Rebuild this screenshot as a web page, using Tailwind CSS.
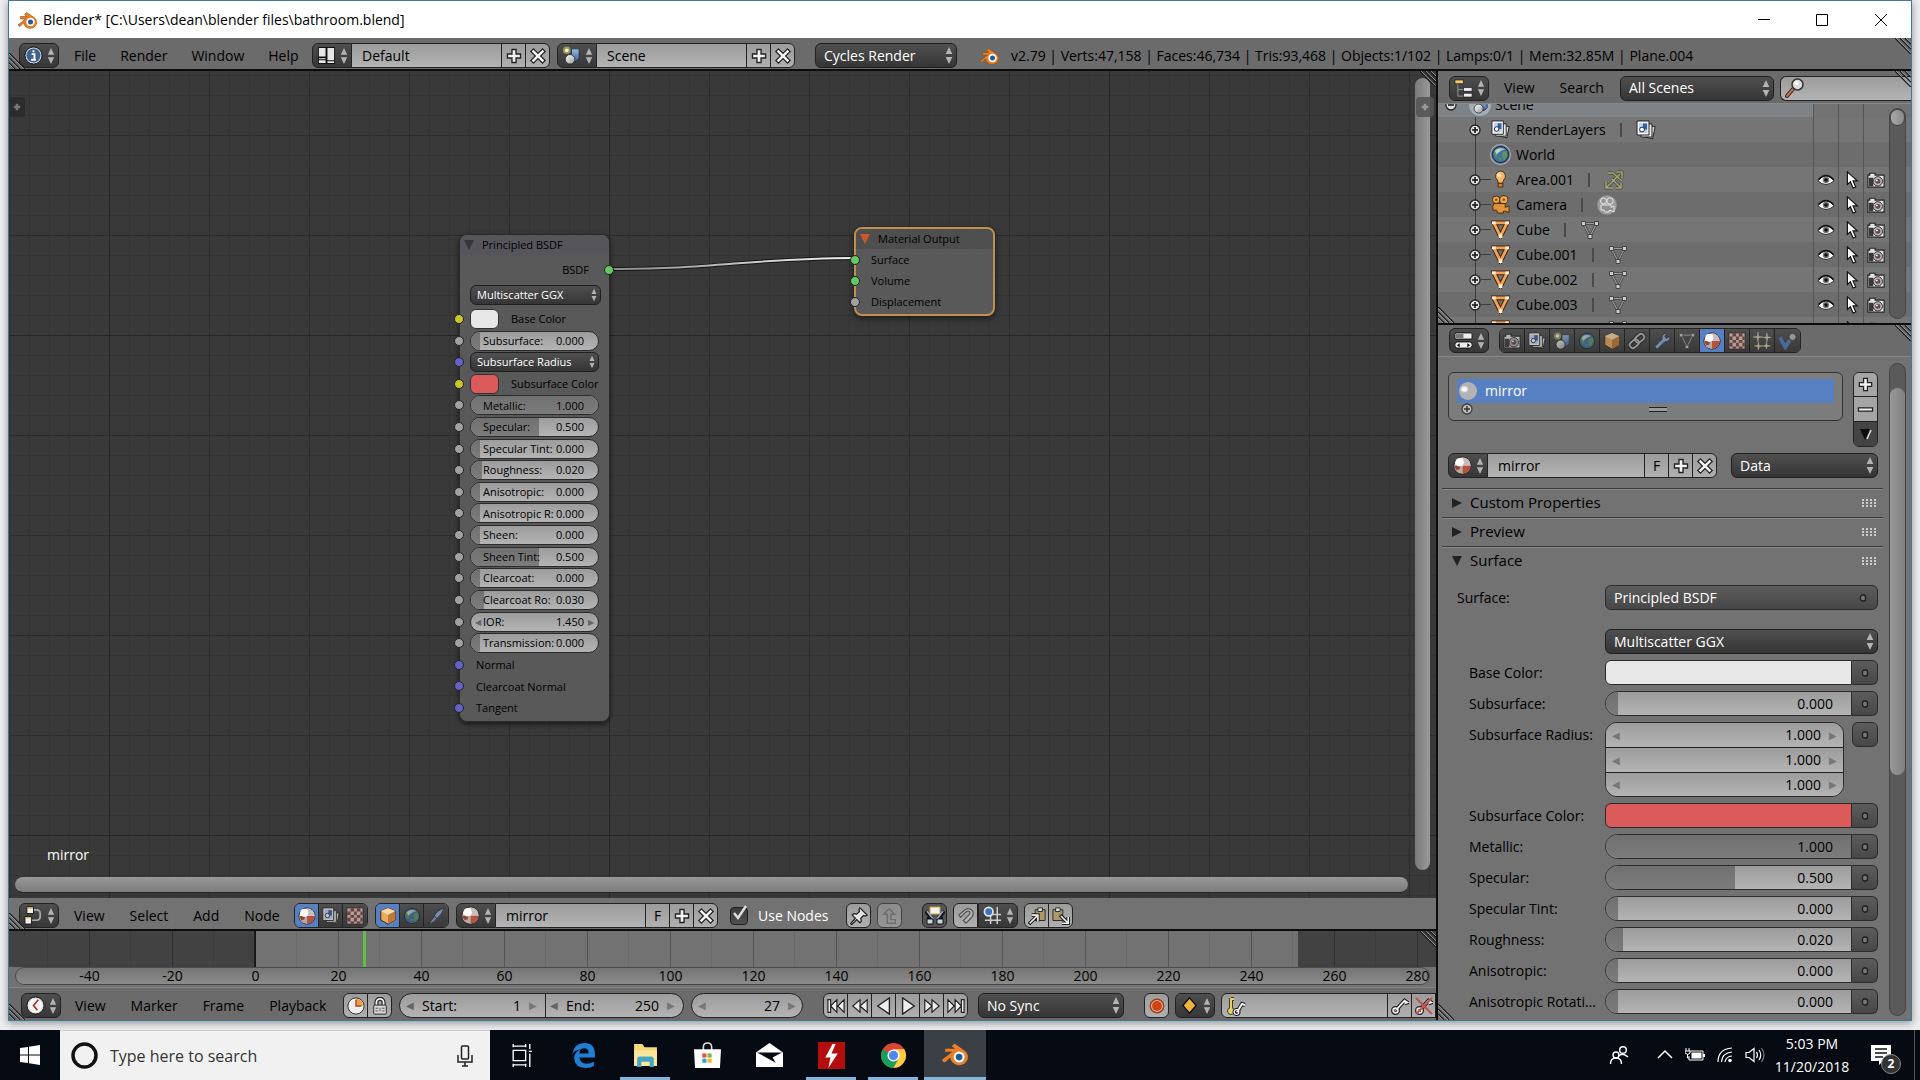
<!DOCTYPE html>
<html lang="en">

<head>
    <meta charset="UTF-8">
    <meta name="viewport" content="width=device-width, initial-scale=1.0">
    <title>Blender* [C:\Users\dean\blender files\bathroom.blend]</title>
    <script src="https://cdn.jsdelivr.net/npm/@tailwindcss/browser@4"></script>
</head>

<body class="h-screen overflow-hidden bg-[#eceef0] font-['Open_Sans','Noto_Sans',sans-serif] text-sm text-black">

    <!-- icon sprites -->
    <svg class="absolute h-0 w-0">
        <defs>
            <linearGradient id="gBall" x1="0" y1="0" x2="1" y2="1"><stop offset="0" stop-color="#fff"/><stop offset="1" stop-color="#999"/></linearGradient>
            <linearGradient id="gBlue" x1="0" y1="0" x2="0" y2="1"><stop offset="0" stop-color="#9dbbe0"/><stop offset="1" stop-color="#3c639b"/></linearGradient>
        </defs>
        <symbol id="arrows" viewBox="0 0 8 20"><path d="M4 1 7.500 8.500H.5zM4 19 .5 11.500h7z" fill="#b4b4b4"/></symbol>
        <symbol id="blender" viewBox="0 0 22 20">
            <path d="M1 15 8.500 9H3.500V6.500h6.500L7.500 4.500l2-2L17 7.500a6.500 6 0 1 1-10.300 5.300L3 16.500z" fill="#ea7f24" stroke="#8a4a1a" stroke-width=".6"/>
            <circle cx="13.500" cy="12" r="4.200" fill="#fff"/><circle cx="13.500" cy="12" r="2.500" fill="#245a8f"/>
        </symbol>
        <symbol id="info" viewBox="0 0 20 20">
            <circle cx="10" cy="10" r="9" fill="#c9d4e2" stroke="#111"/><circle cx="10" cy="10" r="7.300" fill="#40618f"/>
            <path d="M8 8.500h3v5.500M7.500 14.500h5M10 4.500v2.200" stroke="#fff" stroke-width="2" fill="none"/>
        </symbol>
        <symbol id="plus" viewBox="0 0 20 20"><path d="M10 2v16M2 10h16" stroke="#222" stroke-width="6"/><path d="M10 3.500v13M3.500 10h13" stroke="#f2f2f2" stroke-width="3"/></symbol>
        <symbol id="minus" viewBox="0 0 20 20"><path d="M1 10h18" stroke="#222" stroke-width="5.500"/><path d="M2.500 10h15" stroke="#f2f2f2" stroke-width="2.500"/></symbol>
        <symbol id="cross" viewBox="0 0 20 20"><path d="M3 3l14 14M17 3 3 17" stroke="#222" stroke-width="5.500"/><path d="M4 4l12 12M16 4 4 16" stroke="#f2f2f2" stroke-width="2.800"/></symbol>
        <symbol id="layout" viewBox="0 0 20 20"><rect x="1" y="1" width="18" height="18" fill="#111"/><path d="M2 2h7v9H2zM11 2h7v13h-7zM2 13h7v1H2zM2 15h7v3H2zM11 16h7v2h-7z" fill="#e6e6e6"/></symbol>
        <symbol id="scene" viewBox="0 0 20 20">
            <circle cx="5" cy="4.500" r="4" fill="#f3f09a" opacity=".45"/><circle cx="5" cy="4.500" r="2" fill="#f7f5a8"/>
            <path d="M10 3h8v10l-3 3h-5z" fill="url(#gBlue)" stroke="#1b2c48" stroke-width=".8"/>
            <circle cx="8.500" cy="14" r="5" fill="url(#gBall)" stroke="#222" stroke-width=".8"/>
        </symbol>
        <symbol id="outliner" viewBox="0 0 20 20"><path d="M4 5v13h7M4 11h7" stroke="#999" fill="none"/><path d="M1 1h9v4H1z" fill="#f0c96c" stroke="#111" stroke-width=".7"/><path d="M10 9h9v4h-9zM10 15h9v4h-9z" fill="#eee" stroke="#111" stroke-width=".7"/></symbol>
        <symbol id="properties" viewBox="0 0 20 20"><rect x="1" y="2" width="18" height="6.500" rx="1.500" fill="#eee" stroke="#111"/><path d="M2 3h8v4.500H2z" fill="#777"/><rect x="1" y="11.500" width="18" height="6.500" rx="2.500" fill="#eee" stroke="#111"/><path d="M6 13v4l-3-2zM14 13v4l3-2z" fill="#111"/></symbol>
        <symbol id="nodes" viewBox="0 0 20 20"><path d="M9 4h4q4 0 4 4v3q0 4-4 4H8" stroke="#aaa" stroke-width="1.800" fill="none"/><path d="M3 1h7v7H3zM1 11h7v8H1z" fill="#f2efe4" stroke="#111"/><path d="M3.500 1.500h6V3h-6zM1.500 11.500h6V13h-6z" fill="#d9b95a"/></symbol>
        <symbol id="clock" viewBox="0 0 20 20"><circle cx="10" cy="10" r="9" fill="#ddd" stroke="#111"/><circle cx="10" cy="10" r="7" fill="#f6f6f6"/><path d="M13 4 8 10l4 5" stroke="#a32" stroke-width="1.800" fill="none"/></symbol>
        <symbol id="clockorange" viewBox="0 0 20 20"><circle cx="10" cy="10" r="9" fill="#eee" stroke="#222"/><path d="M10 2a8 8 0 0 1 8 8h-8z" fill="#f0a030"/><path d="M10 3v7h6" stroke="#a44" stroke-width="1.600" fill="none"/></symbol>
        <symbol id="lock" viewBox="0 0 20 20"><path d="M6 10V6a4 4 0 0 1 8 0v4" stroke="#222" stroke-width="4.500" fill="none"/><path d="M6 10V6a4 4 0 0 1 8 0v4" stroke="#eee" stroke-width="2" fill="none"/><rect x="3" y="9" width="14" height="10" rx="1" fill="#d5d5d5" stroke="#222"/><path d="M10 12v4M5 12.500h3M12 12.500h3M5 15.500h3M12 15.500h3" stroke="#555"/></symbol>
        <symbol id="layers" viewBox="0 0 20 20"><path d="M9 6h9v12H9z" fill="#ddd" stroke="#222" transform="rotate(12 14 12)"/><path d="M5 4h11v13H5z" fill="#e8e8e8" stroke="#222"/><path d="M1 1h12v14H1z" fill="#f6f6f6" stroke="#222"/><path d="M3 3h8.500v10H3z" fill="#c3d2ea"/><path d="M7 3.500h4v6H7z" fill="#3562a5"/><circle cx="6" cy="9.500" r="2.400" fill="#fff" stroke="#224"/></symbol>
        <symbol id="world" viewBox="0 0 20 20"><circle cx="10" cy="10" r="8.500" fill="#41719e" stroke="#16222e"/><path d="M4 6q4-4 6-2l-1 3-3 2 1 3-2 1-2-4zM12 8l4-2 1 5-3 5-2-2zM8 13l3 1-1 3z" fill="#5f9657"/><path d="M4 6q4-4.500 11-1.500Q9 6 6 10z" fill="#dce8ee" opacity=".75"/></symbol>
        <symbol id="lamp" viewBox="0 0 20 20"><path d="M10 1a5.500 5.500 0 0 1 3.500 9.500q-1 1-1 3.500h-5q0-2.500-1-3.500A5.500 5.500 0 0 1 10 1z" fill="#f3b66c" stroke="#4a2b0b"/><circle cx="8.500" cy="5.500" r="2.200" fill="#ffe2b8"/><path d="M7.500 14h5v4h-5z" fill="#c98032" stroke="#4a2b0b"/></symbol>
        <symbol id="camera" viewBox="0 0 20 20"><circle cx="5.500" cy="5" r="4" fill="#eea64e" stroke="#4a2b0b"/><circle cx="13.500" cy="5" r="4.300" fill="#eea64e" stroke="#4a2b0b"/><path d="M3 9h12v4l4-1.500v7L15 17h-2v2H7l-1-3H2v-4z" fill="#e2923a" stroke="#4a2b0b"/><circle cx="5.500" cy="5" r="1.300" fill="#80501c"/><circle cx="13.500" cy="5" r="1.300" fill="#80501c"/></symbol>
        <symbol id="cameradata" viewBox="0 0 20 20"><circle cx="10" cy="10" r="9.800" fill="#b0b0b0" opacity=".7"/><circle cx="6.500" cy="6" r="3" fill="#999" stroke="#e5e5e5"/><circle cx="13" cy="6" r="3.200" fill="#999" stroke="#e5e5e5"/><path d="M4 10h10v2.500l3-1.500v6l-3-1.500h-2V17H8l-1-2H4z" fill="#8f8f8f" stroke="#e5e5e5"/></symbol>
        <symbol id="lampdata" viewBox="0 0 20 20"><path d="M2 18 16 4M2 11v7h7M9 3l9 8M13 2h5v6M8 9l8 8M12 18h5v-5M4 3l5 0" stroke="#494935" stroke-width="2.800" fill="none"/><path d="M2 18 16 4M2 11v7h7M9 3l9 8M13 2h5v6M8 9l8 8M12 18h5v-5M4 3l5 0" stroke="#a6a57b" stroke-width="1.500" fill="none"/></symbol>
        <symbol id="mesh" viewBox="0 0 20 20"><path d="M3 3h14l-7 14z" fill="none" stroke="#432006" stroke-width="5"/><path d="M3 3h14l-7 14z" fill="none" stroke="#f0a35a" stroke-width="3"/><path d="M1 1.500h4v3H1zM15 1.500h4v3h-4zM8 15h4v4H8z" fill="#fff0dc"/></symbol>
        <symbol id="meshdata" viewBox="0 0 20 20"><path d="M3.500 3.500h13L10 16.500z" fill="none" stroke="#444" stroke-width="2.600"/><path d="M3.500 3.500h13L10 16.500z" fill="none" stroke="#999" stroke-width="1.200"/><path d="M1.500 1.500h4v4h-4zM14.500 1.500h4v4h-4zM8 14.500h4v4H8z" fill="#ccc" stroke="#444"/></symbol>
        <symbol id="eye" viewBox="0 0 20 20"><path d="M1 11q9-11 18 0-9 8-18 0z" fill="#f4f4f4" stroke="#222"/><circle cx="10" cy="10" r="3.500" fill="#777"/><circle cx="10" cy="10" r="2" fill="#111"/><path d="M1.500 9.500q8.500-9 17 0" stroke="#111" stroke-width="1.500" fill="none"/></symbol>
        <symbol id="pointer" viewBox="0 0 20 20"><path d="M6 1v14l3.300-3 3 7 3-1.300-3-6.700H17z" fill="#fff" stroke="#111" stroke-width="1.300"/></symbol>
        <symbol id="photo" viewBox="0 0 20 20"><path d="M1 4.500h2V2.500h6v2h10V18H1z" fill="#e4e4e4" stroke="#222" stroke-width="1.300"/><path d="M2 7.500h5v9.500H2z" fill="#3a3a3a"/><circle cx="12" cy="11.500" r="5.200" fill="#b5b5b5" stroke="#222"/><circle cx="12" cy="11.500" r="2.800" fill="#6b454f"/><circle cx="11" cy="10.500" r="1" fill="#fff"/></symbol>
        <symbol id="cube" viewBox="0 0 20 20"><path d="M10 1 18 4.500v10L10 19l-8-4.500v-10z" fill="#e9a95f" stroke="#3c2208"/><path d="M10 8.500 18 4.500v10L10 19z" fill="#bd7a35"/><path d="M10 1 18 4.500 10 8.500 2 4.500z" fill="#f9d8a8"/></symbol>
        <symbol id="chain" viewBox="0 0 20 20"><g fill="none" stroke="#222" stroke-width="4.500"><rect x="7.500" y="3.500" width="11" height="7" rx="3.500" transform="rotate(-40 13 7)"/><rect x="1.500" y="9.500" width="11" height="7" rx="3.500" transform="rotate(-40 7 13)"/></g><g fill="none" stroke="#bbb" stroke-width="2"><rect x="7.500" y="3.500" width="11" height="7" rx="3.500" transform="rotate(-40 13 7)"/><rect x="1.500" y="9.500" width="11" height="7" rx="3.500" transform="rotate(-40 7 13)"/></g></symbol>
        <symbol id="wrench" viewBox="0 0 20 20"><path d="M2 16 10 8q-1-5 4-7l1 1-2 3 2 2 3-2 1 1q-1 5-6 5l-8 8q-2 0-3-3z" fill="#8fa9d2" stroke="#1c2a42"/></symbol>
        <symbol id="ball" viewBox="0 0 20 20"><circle cx="10" cy="10" r="9" fill="#e8e4e2" stroke="#222"/><path d="M10 10H1.500q0 8 8.500 8.500z" fill="#b9a9a5"/><path d="M10 10h8.500a8.500 8.500 0 0 1-8.500 8.500z" fill="#b4533f"/><path d="M10 1.500a8.500 8.500 0 0 1 8.500 8.500H10z" fill="#c9bcb9"/><path d="M1.500 10H8l-1 4-3 1q-2-2-2.500-5z" fill="#934535"/><circle cx="7" cy="6.500" r="4.500" fill="#fff" opacity=".9"/></symbol>
        <symbol id="checker" viewBox="0 0 20 20"><path d="M1 1h18v18H1z" fill="#d5cac6" stroke="#222"/><path d="M5 1.500h4V5H5zM12 1.500h4V5h-4zM1.500 5H5v4H1.500zM9 5h3v4H9zM16 5h2.500v4H16zM5 9h4v3H5zM12 9h4v3h-4zM1.500 12H5v4H1.500zM9 12h3v4H9zM16 12h2.500v4H16zM5 16h4v2.500H5zM12 16h4v2.500h-4z" fill="#803d35"/></symbol>
        <symbol id="sparks" viewBox="0 0 20 20"><path d="M5.500 0 6.300 5l4.700.5-4.700.8-.8 4.700-.8-4.700L0 5.500 4.700 5zM15.500 1l.7 4.300 3.800.7-3.800.7-.7 4.300-.7-4.300L11 6l3.800-.7zM6 11l.8 4 3.700.5-3.700.8L6 20l-.8-3.700-3.700-.8 3.700-.5zM15 11l.7 3.800 3.800.7-3.800.7L15 19l-.7-2.800-3.800-.7 3.800-.7z" fill="#e0dcae" stroke="#e0dcae" stroke-width=".5"/></symbol>
        <symbol id="physics" viewBox="0 0 20 20"><path d="M1 6l6 11 5-8" fill="none" stroke="#4e7cc0" stroke-width="4"/><circle cx="15" cy="5.500" r="4" fill="#b5b5b5" stroke="#333"/></symbol>
        <symbol id="brush" viewBox="0 0 20 20"><path d="M19 1q-8 3-11 9l3 3q6-5 8-12z" fill="#8fabd8" stroke="#1c2a42"/><path d="M8 10l3 3q-3 5-10 6 4-3 7-9z" fill="#8fa0b8" stroke="#1c2a42"/></symbol>
        <symbol id="pin" viewBox="0 0 20 20"><path d="M11 1l8 8-2 1-2-.5-3 3 .5 3.500-1.500 1.500-3.500-3.500L2 19.500l-1.500-1L6 12.500 2.500 9 4 7.500l3.500.5 3-3L10 3z" fill="#e6e6e6" stroke="#222" stroke-width="1.400"/></symbol>
        <symbol id="uparrow" viewBox="0 0 20 20"><path d="M9 2l6 6h-4v6h5v4H7V8H3z" fill="none" stroke="#6c6c6c" stroke-width="1.600"/></symbol>
        <symbol id="autorender" viewBox="0 0 20 20"><path d="M1 5 7 13M19 5l-6 8M2 13h6M12 13h6M2 16h6M12 16h6" stroke="#111" stroke-width="4"/><path d="M2 5 8 13M18 5l-6 8" stroke="#86a1c5" stroke-width="2"/><path d="M2 13h6v5H2zM12 13h6v5h-6z" fill="#c9d3df" stroke="#111"/><path d="M5 1h10v7H5z" fill="#f1f1f1" stroke="#c9a83d"/></symbol>
        <symbol id="magnet" viewBox="0 0 20 20"><path d="M2 9 9 3q4.500-3 8 1 2.500 4-1 8l-6 6-3-3 6-6q2-2 1-3.500T10.500 5L4 11.500z" fill="#b5b5b5" stroke="#555" stroke-width="1.400"/></symbol>
        <symbol id="snapgrid" viewBox="0 0 20 20"><path d="M8 3v16M15 1v18M2 9h17M2 15h17" stroke="#ccc" stroke-width="1.600"/><circle cx="6" cy="6" r="4.500" fill="#3f74bc" stroke="#dfe9f5" stroke-width="1.800"/></symbol>
        <symbol id="copy" viewBox="0 0 20 20"><path d="M8 3h11v12H8z" fill="#ae9a66" stroke="#222"/><path d="M11 1h5v4h-5z" fill="#ddd" stroke="#222"/><path d="M1 19l8-8M4 9h7v7" stroke="#222" stroke-width="4" fill="none"/><path d="M2 18l8-8M4 9h7v7" stroke="#eee" stroke-width="1.800" fill="none"/></symbol>
        <symbol id="paste" viewBox="0 0 20 20"><path d="M1 3h11v12H1z" fill="#ae9a66" stroke="#222"/><path d="M4 1h5v4H4z" fill="#ddd" stroke="#222"/><path d="M9 9l9 9M18 11v7h-7" stroke="#222" stroke-width="4" fill="none"/><path d="M10 10l8 8M18 11v7h-7" stroke="#eee" stroke-width="1.800" fill="none"/></symbol>
        <symbol id="tostart" viewBox="0 0 20 20"><path d="M1 3h3v14H1zM11 3v14L4 10zM19 3v14l-7-7z" fill="#eee" stroke="#222" stroke-width="1.300"/></symbol>
        <symbol id="prevkey" viewBox="0 0 20 20"><path d="M10 3v14l-8-7zM18 3v14l-8-7z" fill="#eee" stroke="#222" stroke-width="1.300"/></symbol>
        <symbol id="playback" viewBox="0 0 20 20"><path d="M16 1v18L3 10z" fill="#eee" stroke="#222" stroke-width="1.500"/></symbol>
        <symbol id="play" viewBox="0 0 20 20"><path d="M4 1v18l13-9z" fill="#eee" stroke="#222" stroke-width="1.500"/></symbol>
        <symbol id="nextkey" viewBox="0 0 20 20"><path d="M2 3v14l8-7zM10 3v14l8-7z" fill="#eee" stroke="#222" stroke-width="1.300"/></symbol>
        <symbol id="toend" viewBox="0 0 20 20"><path d="M16 3h3v14h-3zM9 3v14l7-7zM1 3v14l7-7z" fill="#eee" stroke="#222" stroke-width="1.300"/></symbol>
        <symbol id="record" viewBox="0 0 20 20"><circle cx="10" cy="10" r="7.500" fill="#d9b0a0" stroke="#a33a15" stroke-width="1.500"/><circle cx="10" cy="10" r="5.500" fill="#d2440f"/></symbol>
        <symbol id="diamond" viewBox="0 0 20 20"><path d="M10 2l7 8-7 8-7-8z" fill="#f3b33c" stroke="#111" stroke-width="1.500"/></symbol>
        <symbol id="key" viewBox="0 0 20 20"><path d="M6 14 15 4l3 2-3 1M6 14" stroke="#222" stroke-width="4.500" fill="none"/><circle cx="5" cy="15" r="3" stroke="#222" stroke-width="4" fill="none"/><path d="M6 14 15 4l3 2-3 1" stroke="#eee" stroke-width="2" fill="none"/><circle cx="5" cy="15" r="2.700" stroke="#eee" stroke-width="1.800" fill="none"/></symbol>
        <symbol id="keyset" viewBox="0 0 20 20"><path d="M5 2v11M5 3h3" stroke="#4a3d10" stroke-width="4"/><circle cx="5" cy="15" r="3.500" fill="#e3cf75" stroke="#4a3d10"/><path d="M5 2v11M5 3h3" stroke="#e3cf75" stroke-width="2"/><path d="M11 16l5-8 3 1" stroke="#222" stroke-width="4" fill="none"/><circle cx="10.500" cy="16" r="2.300" fill="#888" stroke="#222" stroke-width="3.500"/><path d="M11 16l5-8 3 1" stroke="#eee" stroke-width="2" fill="none"/><circle cx="10.500" cy="16" r="2.300" fill="none" stroke="#eee" stroke-width="1.300"/></symbol>
        <symbol id="search" viewBox="0 0 20 20"><path d="M2 18l6-7" stroke="#4b2414" stroke-width="4" stroke-linecap="round"/><path d="M2 18l6-7" stroke="#b4765b" stroke-width="2" stroke-linecap="round"/><circle cx="12.500" cy="6.500" r="5.500" fill="#ddd" stroke="#333" stroke-width="1.500"/><circle cx="11.500" cy="5" r="2" fill="#fff"/></symbol>
        <symbol id="expand" viewBox="0 0 12 12"><circle cx="6" cy="6" r="5" fill="#ddd" stroke="#222" stroke-width="1.300"/><path d="M6 3v6M3 6h6" stroke="#111" stroke-width="1.500"/></symbol>
        <symbol id="collapse" viewBox="0 0 12 12"><circle cx="6" cy="6" r="5" fill="#ddd" stroke="#222" stroke-width="1.300"/><path d="M3 6h6" stroke="#111" stroke-width="1.500"/></symbol>
        <symbol id="corner" viewBox="0 0 16 16"><path d="M0 0 16 16M5 0 16 11M10 0l6 6" stroke="#1c1c1c" stroke-width="1.500"/><path d="M1 0 16 15M6 0l10 10M11 0l5 5" stroke="#b5b5b5" stroke-width=".7"/></symbol>
        <symbol id="socketdot" viewBox="0 0 8 8"><rect x="1.500" y="1" width="5" height="6" rx="2" fill="#777" stroke="#1c1c1c" stroke-width="1.300"/></symbol>
        <symbol id="tabplus" viewBox="0 0 10 10"><path d="M5 1v8M1 5h8" stroke="#999" stroke-width="3"/></symbol>
        <symbol id="grip" viewBox="0 0 15 8"><g fill="#ccc"><path d="M0 0h2v2H0zM4 0h2v2H4zM8 0h2v2H8zM12 0h2v2h-2zM0 3h2v2H0zM4 3h2v2H4zM8 3h2v2H8zM12 3h2v2h-2zM0 6h2v2H0zM4 6h2v2H4zM8 6h2v2H8zM12 6h2v2h-2z"/></g></symbol>
    </svg>

    <div class="flex h-full flex-col">
        <!-- application window -->
        <main class="mx-2 mb-[9px] flex min-h-0 flex-1 flex-col border border-[#3f789f] bg-[#727272] shadow-[0_2px_8px_rgba(0,0,0,0.4)]">
            <header class="flex h-[37px] shrink-0 items-center bg-white pl-2">
                <svg class="h-5 w-[22px]"><use href="#blender" /></svg>
                <h1 class="ml-1">Blender* [C:\Users\dean\blender files\bathroom.blend]</h1>
                <div class="ml-auto flex">
                    <button aria-label="Minimize" class="flex h-9 w-[58px] items-center justify-center"><svg class="h-3 w-3" viewBox="0 0 12 12"><path d="M0 5.500h12" stroke="#000" /></svg></button>
                    <button aria-label="Maximize" class="flex h-9 w-[58px] items-center justify-center"><svg class="h-3 w-3" viewBox="0 0 12 12"><path d="M.5.5h11v11H.5z" fill="none" stroke="#000" /></svg></button>
                    <button aria-label="Close" class="flex h-9 w-[60px] items-center justify-center"><svg class="h-3 w-3" viewBox="0 0 12 12"><path d="M0 0l12 12M12 0 0 12" stroke="#000" /></svg></button>
                </div>
            </header>

            <nav class="relative flex h-[33px] shrink-0 items-center border-b-2 border-[#0c0c0c] bg-[#6b6b6b] pt-1 pl-2.5">
                <button data-selector="info"></button>
                <div class="flex w-[253px] gap-6 pl-[15px]"><button>File</button><button>Render</button><button>Window</button><button>Help</button></div>
                <div class="flex"><button data-selector="layout" data-join="1"></button><input aria-label="Screen layout" value="Default" data-text="150"><button data-icon="plus"></button><button data-icon="cross" data-end="1"></button></div>
                <div class="ml-[7px] flex"><button data-selector="scene" data-join="1"></button><input aria-label="Scene" value="Scene" data-text="150"><button data-icon="plus"></button><button data-icon="cross" data-end="1"></button></div>
                <div class="ml-5 w-[142px]" data-menu="Cycles Render" data-label="Render engine"></div>
                <svg class="ml-[22px] h-5 w-[22px]"><use href="#blender" /></svg>
                <p class="ml-2.5 whitespace-nowrap">v2.79 | Verts:47,158 | Faces:46,734 | Tris:93,468 | Objects:1/102 | Lamps:0/1 | Mem:32.85M | Plane.004</p>
                <svg class="absolute top-0 right-0 h-4 w-4"><use href="#corner" /></svg>
                <svg class="absolute bottom-0 left-0 h-4 w-4 rotate-180"><use href="#corner" /></svg>
            </nav>

            <div class="flex min-h-0 flex-1">
                <div class="flex min-w-0 flex-1 flex-col border-r-2 border-[#0c0c0c]">
                    <!-- node editor -->
                    <section aria-label="Node editor" class="relative min-h-0 flex-1 overflow-hidden bg-[#393939] bg-[linear-gradient(90deg,#262626_1px,transparent_1px),linear-gradient(#262626_1px,transparent_1px),linear-gradient(90deg,#2d2d2d_1px,transparent_1px),linear-gradient(#2d2d2d_1px,transparent_1px),linear-gradient(90deg,#343434_1px,transparent_1px),linear-gradient(#343434_1px,transparent_1px)] bg-[size:500px_100%,100%_500px,100px_100%,100%_100px,20px_100%,100%_20px] bg-[position:100px_0,0_264px,0_0,0_64px,0_0,0_4px]">
                        <svg class="absolute top-0 left-0 h-full w-full" aria-hidden="true">
                            <defs><linearGradient id="gLink" gradientUnits="userSpaceOnUse" x1="600" y1="0" x2="845" y2="0"><stop offset="0" stop-color="#8a8a8a" /><stop offset="1" stop-color="#f5f5f5" /></linearGradient></defs>
                            <path d="M600 198C700 199 745 187 845 187" fill="none" stroke="#151515" stroke-width="4" />
                            <path d="M600 198C700 199 745 187 845 187" fill="none" stroke="url(#gLink)" stroke-width="2" />
                        </svg>

                        <article class="absolute top-[163px] left-[450px] w-[151px] rounded-lg border border-[#2a2a2a] bg-[#5b5b5b]/95 text-[11px] whitespace-nowrap shadow-[0_2px_5px_rgba(0,0,0,0.6)]">
                            <h2 class="flex h-5 items-center gap-2 rounded-t-lg bg-[#57555c] pl-1"><svg class="h-2.5 w-2.5" viewBox="0 0 10 10"><path d="M0 0h10L5 10z" fill="#37343b" /></svg>Principled BSDF</h2>
                            <div class="relative flex h-[30px] items-center justify-end pr-5">BSDF<span class="absolute -right-[5px] h-[10px] w-[10px] rounded-full border border-[#222] bg-[#63c763]"></span></div>
                            <div class="mb-1 ml-2.5 w-[131px]" data-menu="Multiscatter GGX" data-small="1" data-label="Distribution"></div>
                            <div id="node-rows" class="flex h-[409px] flex-col justify-between"></div>
                            <div class="h-[3px]"></div>
                        </article>

                        <article class="absolute top-[156px] left-[845px] w-[141px] rounded-lg border-2 border-[#bf8f50] bg-[#5b5b5b]/95 text-[11px] shadow-[0_2px_6px_rgba(0,0,0,0.6)]">
                            <h2 class="flex h-5 items-center gap-2 rounded-t-md bg-[#4e4e4e] pl-1"><svg class="h-2.5 w-2.5" viewBox="0 0 10 10"><path d="M0 0h10L5 10z" fill="#c9592a" /></svg>Material Output</h2>
                            <ul class="pb-0.5">
                                <li class="relative flex h-[21px] items-center pl-[15px]"><span class="absolute -left-[6px] h-[10px] w-[10px] rounded-full border border-[#222] bg-[#63c763]"></span>Surface</li>
                                <li class="relative flex h-[21px] items-center pl-[15px]"><span class="absolute -left-[6px] h-[10px] w-[10px] rounded-full border border-[#222] bg-[#63c763]"></span>Volume</li>
                                <li class="relative flex h-[21px] items-center pl-[15px]"><span class="absolute -left-[6px] h-[10px] w-[10px] rounded-full border border-[#222] bg-[#a1a1a1]"></span>Displacement</li>
                            </ul>
                        </article>

                        <p class="absolute bottom-[33px] left-[38px] text-white">mirror</p>
                        <div class="absolute top-[26px] left-0 flex h-5 w-4 items-center justify-center rounded-r bg-[#2c2c2c]"><svg class="h-2 w-2 opacity-70"><use href="#tabplus" /></svg></div>
                        <div class="absolute top-[7px] right-1.5 bottom-7 w-[15px] rounded-full bg-linear-to-r from-[#7a7a7a] to-[#999]"></div>
                        <div class="absolute top-[26px] right-0.5 flex h-5 w-[18px] items-center justify-center rounded bg-[#555]/90"><svg class="h-2 w-2"><use href="#tabplus" /></svg></div>
                        <div class="absolute right-7 bottom-[5px] left-1.5 h-4 rounded-full border-b border-[#222] bg-linear-to-b from-[#999] to-[#7c7c7c]"></div>
                        <svg class="absolute top-0 right-0 h-4 w-4"><use href="#corner" /></svg>
                    </section>

                    <div class="relative flex h-[33px] shrink-0 items-center border-b-2 border-[#0c0c0c] bg-[#727272] pt-1 pl-2.5">
                        <button data-selector="nodes"></button>
                        <div class="flex w-[235px] gap-[25px] pl-[15px]"><button>View</button><button>Select</button><button>Add</button><button>Node</button></div>
                        <div class="flex overflow-hidden rounded-md border border-[#222]"><button data-tab="ball" data-on="1"></button><button data-tab="layers"></button><button data-tab="checker"></button></div>
                        <div class="ml-[7px] flex overflow-hidden rounded-md border border-[#222]"><button data-tab="cube" data-on="1"></button><button data-tab="world"></button><button data-tab="brush"></button></div>
                        <div class="ml-[7px] flex"><button data-selector="ball" data-join="1"></button><input aria-label="Material" value="mirror" data-text="150"><button data-icon="">F</button><button data-icon="plus"></button><button data-icon="cross" data-end="1"></button></div>
                        <label class="ml-3 flex items-center gap-2.5 text-white">
                            <span class="relative h-[18px] w-[18px]"><input type="checkbox" checked class="block h-[18px] w-[18px] appearance-none rounded border border-[#1f1f1f] bg-linear-to-b from-[#3b3b3b] to-[#505050]"><svg class="pointer-events-none absolute -top-1 left-0.5 h-5 w-[18px]" viewBox="0 0 18 20"><path d="M2 10l4 5L14 3" fill="none" stroke="#ddd" stroke-width="2.500" /></svg></span>
                            Use Nodes
                        </label>
                        <button class="ml-[18px]" data-icon="pin" data-solo="1"></button>
                        <button class="ml-1.5 opacity-60" data-icon="uparrow" data-solo="1"></button>
                        <button aria-label="Auto render" class="ml-5 flex h-[25px] w-[25px] items-center justify-center rounded-md border border-[#222] bg-[#555]"><svg class="h-5 w-5"><use href="#autorender" /></svg></button>
                        <div class="ml-1.5 flex"><button class="rounded-l-md" data-icon="magnet"></button><button data-selector="snapgrid" data-right="1"></button></div>
                        <div class="ml-1.5 flex"><button class="rounded-l-md" data-icon="copy"></button><button data-icon="paste" data-end="1"></button></div>
                        <svg class="absolute bottom-0 left-0 h-4 w-4 rotate-180"><use href="#corner" /></svg>
                    </div>

                    <!-- timeline -->
                    <section aria-label="Timeline" class="relative h-[56px] shrink-0 overflow-hidden">
                        <div class="relative flex h-9 bg-[#727272]">
                            <div class="w-[247px] border-r-2 border-[#1c1c1c] bg-[#424242]"></div>
                            <div class="w-[1042px]"></div>
                            <div class="flex-1 bg-[#424242]"></div>
                            <div class="absolute inset-0 bg-[linear-gradient(90deg,rgba(0,0,0,0.25)_1px,transparent_1px),linear-gradient(90deg,rgba(0,0,0,0.07)_1px,transparent_1px)] bg-[size:83px_100%,83px_100%] bg-[position:80px_0,38px_0]"></div>
                            <div class="absolute top-0 left-[354px] h-full w-[3px] bg-[#5dc244]"></div>
                        </div>
                        <div class="h-5">
                            <ol id="frames" class="mx-1.5 flex h-[18px] items-center overflow-hidden rounded-full border border-[#4a4a4a] bg-linear-to-b from-[#747474] to-[#8c8c8c] pl-8"></ol>
                        </div>
                        <svg class="absolute top-0 right-0 h-4 w-4"><use href="#corner" /></svg>
                    </section>

                    <div class="relative flex h-[33px] shrink-0 items-center border-t border-[#868686] bg-[#6b6b6b] pt-[3px] pl-3">
                        <button data-selector="clock"></button>
                        <div class="flex w-[282px] gap-[25px] pl-[14px]"><button>View</button><button>Marker</button><button>Frame</button><button>Playback</button></div>
                        <div class="flex"><button class="rounded-l-md" data-icon="clockorange"></button><button data-icon="lock" data-end="1"></button></div>
                        <div class="ml-[7px] flex h-[25px] overflow-hidden rounded-full border border-[#222] bg-linear-to-b from-[#9c9c9c] to-[#b4b4b4]">
                            <label class="flex w-[146px] items-center border-r border-[#222] pr-2 pl-1.5"><span class="mr-2 text-[10px] text-[#666]">◀</span>Start:<input value="1" class="min-w-0 flex-1 text-right"><span class="ml-2 text-[10px] text-[#777]">▶</span></label>
                            <label class="flex w-[137px] items-center pr-2 pl-1"><span class="mr-2 text-[10px] text-[#666]">◀</span>End:<input value="250" class="min-w-0 flex-1 text-right"><span class="ml-2 text-[10px] text-[#777]">▶</span></label>
                        </div>
                        <div class="ml-[7px] flex h-[25px] w-[112px] items-center rounded-full border border-[#222] bg-linear-to-b from-[#9c9c9c] to-[#b4b4b4] px-1.5 text-[#777]"><span class="text-[10px]">◀</span><input aria-label="Current frame" value="27" class="min-w-0 flex-1 text-right text-black"><span class="ml-2 text-[10px]">▶</span></div>
                        <div class="ml-5 flex"><button class="rounded-l-md" data-icon="tostart"></button><button data-icon="prevkey"></button><button data-icon="playback"></button><button data-icon="play"></button><button data-icon="nextkey"></button><button data-icon="toend" data-end="1"></button></div>
                        <div class="ml-2.5 w-[146px]" data-menu="No Sync" data-label="Sync"></div>
                        <button class="ml-5" data-icon="record" data-solo="1"></button>
                        <button class="ml-1.5" data-selector="diamond"></button>
                        <label class="ml-1.5 flex h-[25px] min-w-0 flex-1 items-center rounded-l-md border border-[#222] bg-linear-to-b from-[#9c9c9c] to-[#b4b4b4] pl-1"><svg class="h-5 w-5"><use href="#keyset" /></svg><input aria-label="Keying set" class="min-w-0 flex-1"></label>
                        <button data-icon="key"></button>
                        <button class="relative" data-icon="key" data-struck="1"></button>
                        <svg class="absolute bottom-0 left-0 h-4 w-4 rotate-180"><use href="#corner" /></svg>
                    </div>
                </div>

                <aside class="flex w-[473px] shrink-0 flex-col">
                    <!-- outliner -->
                    <div class="relative flex h-[33px] shrink-0 items-center overflow-hidden border-b border-[#888] bg-[#6b6b6b] pt-0.5 pl-[11px]">
                        <button data-selector="outliner"></button>
                        <div class="flex w-[131px] shrink-0 gap-[25px] pl-[15px]"><button>View</button><button>Search</button></div>
                        <div class="w-[154px] shrink-0" data-menu="All Scenes" data-label="Display mode"></div>
                        <label class="ml-1.5 flex h-[25px] flex-1 items-center rounded-l-md border border-r-0 border-[#222] bg-linear-to-b from-[#9c9c9c] to-[#b4b4b4] pl-1"><svg class="h-5 w-5"><use href="#search" /></svg><input type="search" aria-label="Filter" class="min-w-0 flex-1"></label>
                        <svg class="absolute top-0 right-0 h-4 w-4"><use href="#corner" /></svg>
                    </div>
                    <section aria-label="Outliner" class="relative h-[221px] shrink-0 overflow-hidden border-b-2 border-[#0c0c0c]">
                        <ul id="outline" class="-mt-3"></ul>
                        <div class="absolute top-3 bottom-0 left-[37px] w-px bg-[#3c3c3c]"></div>
                        <div class="absolute top-1 right-[5px] bottom-1 z-20 w-[17px] rounded-full border border-[#444] bg-[#5a5a5a]"><div class="h-[17px] rounded-full border border-[#444] bg-linear-to-r from-[#aaa] to-[#888]"></div></div>
                        <svg class="absolute bottom-0 left-0 h-4 w-4 rotate-180"><use href="#corner" /></svg>
                    </section>

                    <!-- properties editor -->
                    <div class="relative flex h-8 shrink-0 items-center border-b border-[#888] bg-[#6b6b6b] pl-[11px]">
                        <button data-selector="properties"></button>
                        <div id="tabs" class="ml-2.5 flex overflow-hidden rounded-md border border-[#222]"></div>
                        <svg class="absolute top-0 right-0 h-4 w-4"><use href="#corner" /></svg>
                    </div>
                    <section aria-label="Properties" class="relative min-h-0 flex-1 overflow-hidden">
                        <div class="mr-[33px] ml-2.5 flex gap-2.5 pt-[15px]">
                            <div class="h-[49px] flex-1 rounded-md border border-[#333] bg-[#7c7c7c] px-2 pt-1.5">
                                <div class="flex h-6 items-center gap-2 bg-[#5680c2] pl-0.5 text-white"><span class="h-[18px] w-[18px] rounded-full bg-radial-[at_30%_40%] from-white from-10% to-[#b3b3b3] to-25%"></span>mirror</div>
                                <div class="flex items-center pl-1"><svg class="h-3 w-3 opacity-70"><use href="#expand" /></svg><span class="ml-[176px] h-[5px] w-[18px] border-y border-[#222] bg-[#999]"></span></div>
                            </div>
                            <div class="flex w-[25px] flex-col overflow-hidden rounded-md border border-[#222]">
                                <button aria-label="Add slot" class="flex h-6 items-center justify-center border-b border-[#222] bg-[#a5a5a5]"><svg class="h-[17px] w-[17px]"><use href="#plus" /></svg></button>
                                <button aria-label="Remove slot" class="flex h-[25px] items-center justify-center border-b border-[#222] bg-[#a5a5a5]"><svg class="h-[17px] w-[17px]"><use href="#minus" /></svg></button>
                                <button aria-label="Specials" class="flex h-6 items-center justify-center bg-[#444]"><svg class="h-4 w-4" viewBox="0 0 16 16"><path d="M2 3h10L7 14z" fill="#0c0c0c" /><path d="M13 4 9 13" stroke="#ddd" stroke-width="1.500" /></svg></button>
                            </div>
                        </div>
                        <div class="mt-1.5 mr-[33px] ml-2.5 flex">
                            <button data-selector="ball" data-join="1"></button><input aria-label="Material name" value="mirror" data-text="157"><button data-icon="">F</button><button data-icon="plus"></button><button data-icon="cross" data-end="1"></button>
                            <div class="ml-3.5 min-w-0 flex-1" data-menu="Data" data-label="Link to"></div>
                        </div>
                        <div class="mt-2.5 mr-7 ml-1 text-[15px]">
                            <h3 class="flex h-[29px] items-center gap-2 border-t border-[#3c3c3c] pr-1.5 pl-2.5 shadow-[inset_0_1px_#888]"><svg class="h-2.5 w-2.5" viewBox="0 0 10 10"><path d="M0 0v10l10-5z" fill="#222" /></svg>Custom Properties<svg class="ml-auto h-2 w-[15px]"><use href="#grip" /></svg></h3>
                            <h3 class="flex h-[29px] items-center gap-2 border-t border-[#3c3c3c] pr-1.5 pl-2.5 shadow-[inset_0_1px_#888]"><svg class="h-2.5 w-2.5" viewBox="0 0 10 10"><path d="M0 0v10l10-5z" fill="#222" /></svg>Preview<svg class="ml-auto h-2 w-[15px]"><use href="#grip" /></svg></h3>
                            <h3 class="flex h-[29px] items-center gap-2 border-t border-[#3c3c3c] pr-1.5 pl-2.5 shadow-[inset_0_1px_#888]"><svg class="h-2.5 w-2.5" viewBox="0 0 10 10"><path d="M0 0h10L5 10z" fill="#222" /></svg>Surface<svg class="ml-auto h-2 w-[15px]"><use href="#grip" /></svg></h3>
                        </div>
                        <div class="mt-2.5 mr-[33px] ml-[19px]">
                            <div class="mb-[19px] flex h-[25px] items-center">
                                <span class="w-[148px]">Surface:</span>
                                <button class="flex h-[25px] flex-1 items-center justify-between rounded-md border border-[#2b2b2b] bg-linear-to-b from-[#5c5c5c] to-[#474747] pr-2.5 pl-2 text-white">Principled BSDF<svg class="h-2 w-2"><use href="#socketdot" /></svg></button>
                            </div>
                            <div class="mb-1.5 ml-[148px]" data-menu="Multiscatter GGX" data-label="Distribution"></div>
                            <div id="props" class="flex flex-col gap-1.5"></div>
                        </div>
                        <div class="absolute top-1.5 right-[5px] bottom-1 w-[17px] rounded-full border border-[#444] bg-[#5a5a5a] pt-6"><div class="h-[387px] rounded-full bg-linear-to-r from-[#999] to-[#808080]"></div></div>
                        <svg class="absolute bottom-0 left-0 h-4 w-4 rotate-180"><use href="#corner" /></svg>
                    </section>
                </aside>
            </div>
        </main>

        <!-- windows taskbar -->
        <footer class="flex h-[50px] shrink-0 bg-[#060b13] text-white">
            <button aria-label="Start" class="flex w-[60px] items-center justify-center"><svg class="h-5 w-5" viewBox="0 0 20 20"><path d="M0 3l8-1v7.500H0zM9 1.800 20 0v9.500H9zM0 10.500h8V18l-8-1zM9 10.500h11V20L9 18.200z" fill="#fff" /></svg></button>
            <label class="flex w-[430px] items-center border-t border-[#ccc] bg-[#f1f1f1] pr-4 pl-[11px] text-[#333]">
                <svg class="h-[27px] w-[27px]" viewBox="0 0 27 27"><circle cx="13.500" cy="13.500" r="11.500" fill="none" stroke="#111" stroke-width="3.500" /></svg>
                <input placeholder="Type here to search" aria-label="Search" class="ml-3 min-w-0 flex-1 text-base placeholder:text-[#333]">
                <svg class="h-[22px] w-[18px]" viewBox="0 0 18 22"><rect x="5.500" y="1" width="7" height="13" rx="1" fill="none" stroke="#222" stroke-width="1.500" /><path d="M2 10v7h14v-7M9 17v4M6 21h6" fill="none" stroke="#222" stroke-width="1.500" /></svg>
            </label>
            <div id="taskbar" class="flex"></div>
            <div class="ml-auto flex items-center pr-[5px]">
                <svg class="mr-7 h-5 w-5" viewBox="0 0 20 20" fill="none" stroke="#fff" stroke-width="1.400"><circle cx="14" cy="5" r="3.300" /><path d="M9.500 11q4-4 9.500 1" /><circle cx="7" cy="10" r="3" /><path d="M1.500 19q0-6 5.500-6t5.500 6" /></svg>
                <svg class="mr-3 h-4 w-4" viewBox="0 0 16 16"><path d="M1 11l7-7 7 7" fill="none" stroke="#fff" stroke-width="1.500" /></svg>
                <svg class="mr-3 h-4 w-5" viewBox="0 0 20 16"><path d="M5 4h13v9H4V9" fill="none" stroke="#fff" /><path d="M6.500 5.500h10v6h-10zM18 7h2v3h-2z" fill="#fff" /><path d="M1 1v3M4 1v3M0 4h5v2q-2 3-5 0zM2.500 7v4H4" stroke="#fff" fill="none" /></svg>
                <svg class="mr-3 h-4 w-4" viewBox="0 0 16 16" fill="none" stroke="#fff" stroke-width="1.200"><path d="M1 15Q1 2 15 1M4.500 15Q5 6 15 5M8 15q1-5.500 7-6" /><circle cx="13" cy="13.500" r="1.800" fill="#fff" stroke="none" /></svg>
                <svg class="mr-2 h-4 w-5" viewBox="0 0 20 16" fill="none" stroke="#fff" stroke-width="1.200"><path d="M1 5.500h3L9 1.500v13L4 10.500H1z" /><path d="M11.500 5q2 3 0 6M14 3q3.500 5 0 10" /><path d="M16.500 1q5 7 0 14" stroke="#777" /></svg>
                <div class="w-[78px] text-center leading-[23px]"><p>5:03 PM</p><p>11/20/2018</p></div>
                <button aria-label="Notifications" class="relative mr-[23px] ml-5 h-5 w-5">
                    <svg class="h-5 w-5" viewBox="0 0 20 20"><path d="M0 0h20v16h-8l-4 4v-4H0z" fill="#fff" /><path d="M4 4h12M4 8h12M4 12h8" stroke="#111" stroke-width="1.300" /></svg>
                    <span class="absolute top-[9px] left-[10px] flex h-5 w-5 items-center justify-center rounded-full border border-[#888] bg-[#333] text-xs font-bold">2</span>
                </button>
                <span class="h-[50px] w-px bg-[#555]"></span>
            </div>
        </footer>
    </div>

    <script>
        const icon = (id, cls = 'h-5 w-5') => `<svg class="${cls}"><use href="#${id}"/></svg>`;
        const add = (el, cls) => el.classList.add(...cls.split(' '));
        const $ = id => document.getElementById(id);

        // outliner rows: name, icon, data icon
        const objects = [
            ['RenderLayers', 'layers', 'layers'], ['World', 'world', ''], ['Area.001', 'lamp', 'lampdata'], ['Camera', 'camera', 'cameradata'],
            ['Cube', 'mesh', 'meshdata'], ['Cube.001', 'mesh', 'meshdata'], ['Cube.002', 'mesh', 'meshdata'], ['Cube.003', 'mesh', 'meshdata'], ['Cube.004', 'mesh', 'meshdata'],
        ];
        const toggles = show => ['eye', 'pointer', 'photo'].map(i => `<span class="flex h-full w-[25px] items-center justify-center border-l border-[#555]">${show ? icon(i, 'h-[18px] w-[18px]') : ''}</span>`).join('');
        $('outline').innerHTML = `<li class="relative z-10 flex h-[25px] items-center bg-[#727272]"><div class="flex h-full flex-1 items-center bg-[#7d8387] pl-[7px]">${icon('collapse', 'h-3 w-3 mr-3')}<span class="mr-1 rounded-full bg-[#a4aeb8] p-0.5">${icon('scene', 'h-[18px] w-[18px]')}</span>Scene</div>${toggles(false)}<span class="w-[23px]"></span></li>` +
            objects.map(([name, ic, data], i) => `
            <li class="flex h-[25px] items-center ${i % 2 ? 'bg-[#6d6d6d]' : 'bg-[#757575]'}">
                <div class="relative z-10 flex flex-1 items-center pl-[31px]">
                    ${name === 'World' ? '<span class="w-3"></span>' : icon('expand', 'h-3 w-3')}
                    <span class="${i > 1 ? 'bg-[#3c3c3c]' : ''} h-px w-2.5"></span>
                    <span class="${name === 'World' ? 'rounded-full ring-1 ring-[#a4b4cc]' : ''}">${icon(ic, 'h-[19px] w-[19px]')}</span>
                    <span class="ml-1.5">${name}</span>
                    ${data ? `<span class="mx-3.5 h-3.5 w-0.5 bg-[#4a4a4a]"></span>${icon(data, 'h-5 w-5')}` : ''}
                </div>${toggles(i > 1)}<span class="w-[23px]"></span>
            </li>`).join('');

        // properties tabs
        const tab = (id, on) => `<span class="flex h-[23px] items-center justify-center ${on ? 'bg-[#5680c2]' : 'bg-linear-to-b from-[#4e4e4e] to-[#3a3a3a]'}">${icon(id, on ? 'h-[18px] w-[18px]' : 'h-[18px] w-[18px] opacity-70')}</span>`;
        $('tabs').innerHTML = ['photo', 'layers', 'scene', 'world', 'cube', 'chain', 'wrench', 'meshdata', 'ball', 'checker', 'sparks', 'physics']
            .map(id => `<button aria-label="${id}" class="w-[25px] border-r border-[#222] last:border-r-0">${tab(id, id === 'ball')}</button>`).join('');
        document.querySelectorAll('[data-tab]').forEach(el => {
            add(el, 'w-6 border-r border-[#222] last:border-r-0');
            el.ariaLabel = el.dataset.tab;
            el.innerHTML = tab(el.dataset.tab, el.dataset.on);
        });

        // widgets
        document.querySelectorAll('[data-selector]').forEach(el => {
            add(el, 'flex h-[25px] w-10 shrink-0 items-center justify-center gap-1 border border-[#222] bg-linear-to-b from-[#4e4e4e] to-[#373737]');
            add(el, el.dataset.join ? 'rounded-l-md' : el.dataset.right ? 'rounded-r-md' : 'rounded-md');
            el.ariaLabel = el.dataset.selector;
            el.innerHTML = icon(el.dataset.selector, 'h-[19px] w-[19px]') + icon('arrows', 'h-[18px] w-2');
        });
        document.querySelectorAll('[data-text]').forEach(el => {
            add(el, 'h-[25px] min-w-0 border-y border-[#222] bg-linear-to-b from-[#9c9c9c] to-[#b4b4b4] pl-2.5');
            add(el, el.dataset.text === '150' ? 'w-[150px]' : 'w-[157px]');
        });
        document.querySelectorAll('[data-icon]').forEach(el => {
            add(el, 'flex h-[25px] w-[25px] shrink-0 items-center justify-center border border-[#222] bg-linear-to-b from-[#9c9c9c] to-[#b0b0b0]');
            if (el.dataset.solo) add(el, 'rounded-md');
            else if (!el.classList.contains('rounded-l-md')) add(el, '-ml-px');
            if (el.dataset.end) add(el, 'rounded-r-md');
            if (el.dataset.icon) { el.ariaLabel = el.dataset.icon; el.innerHTML = icon(el.dataset.icon, 'h-[18px] w-[18px]'); }
            if (el.dataset.struck) el.innerHTML += '<svg class="absolute h-5 w-5" viewBox="0 0 20 20"><path d="M2 2l16 16M18 2 2 18" stroke="#c0544c" stroke-width="2"/></svg>';
        });
        document.querySelectorAll('[data-menu]').forEach(el => {
            const small = el.dataset.small;
            add(el, 'relative');
            el.innerHTML = `<select aria-label="${el.dataset.label}" class="${small ? 'h-5 pl-1.5' : 'h-[25px] pl-2'} block w-full appearance-none rounded-md border border-[#1f1f1f] bg-linear-to-b from-[#505050] to-[#353535] text-white"><option>${el.dataset.menu}</option></select>` +
                icon('arrows', small ? 'pointer-events-none absolute top-[3px] right-1 h-[14px] w-1.5' : 'pointer-events-none absolute top-[3px] right-1 h-[19px] w-2');
        });

        // shader inputs: socket, label, value, slider position
        const yellow = 'bg-[#c7c729]', grey = 'bg-[#a1a1a1]', blue = 'bg-[#6363c7]';
        const rows = [
            [yellow, 'Base Color', 'bg-[#e7e7e7]'], [grey, 'Subsurface:', '0.000', 0], [blue, 'Subsurface Radius', 'menu'], [yellow, 'Subsurface Color', 'bg-[#db5a5a]'],
            [grey, 'Metallic:', '1.000', 1], [grey, 'Specular:', '0.500', 0.5], [grey, 'Specular Tint:', '0.000', 0], [grey, 'Roughness:', '0.020', 0.02],
            [grey, 'Anisotropic:', '0.000', 0], [grey, 'Anisotropic R:', '0.000', 0], [grey, 'Sheen:', '0.000', 0], [grey, 'Sheen Tint:', '0.500', 0.5],
            [grey, 'Clearcoat:', '0.000', 0], [grey, 'Clearcoat Ro:', '0.030', 0.03], [grey, 'IOR:', '1.450', null], [grey, 'Transmission:', '0.000', 0],
            [blue, 'Normal'], [blue, 'Clearcoat Normal'], [blue, 'Tangent'],
        ];
        $('node-rows').innerHTML = rows.map(([color, label, value, pos]) => {
            let body = `<span class="ml-4">${label}</span>`;
            if (value === 'menu') body = `<div class="relative ml-2.5 w-[129px]"><select aria-label="${label}" class="block h-5 w-full appearance-none rounded-md border border-[#1f1f1f] bg-linear-to-b from-[#505050] to-[#353535] pl-1.5 text-white"><option>${label}</option></select>${icon('arrows', 'pointer-events-none absolute top-[3px] right-1 h-[14px] w-1.5')}</div>`;
            else if (value && value.startsWith('bg')) body = `<button aria-label="${label}" class="mr-3 ml-2.5 h-5 w-[29px] shrink-0 rounded-md border border-[#333] ${value}"></button>${label}`;
            else if (value) body = `<label class="relative ml-2.5 flex h-5 w-[129px] items-center overflow-hidden rounded-full border border-[#2b2b2b] bg-linear-to-b from-[#9c9c9c] to-[#b4b4b4] pr-3.5 pl-3">
                ${pos === null ? '<span class="absolute left-1 text-[8px] text-[#666]">◀</span><span class="absolute right-1 text-[8px] text-[#666]">▶</span>' : `<span class="absolute inset-y-0 left-0 bg-linear-to-b from-[#707070] to-[#7c7c7c]" style="width:calc(9px + ${pos} * (100% - 9px))"></span>`}
                <span class="relative">${label}</span><input value="${value}" class="relative ml-auto w-[30px] shrink-0 text-right"></label>`;
            return `<div class="relative flex h-5 items-center"><span class="absolute -left-[6px] h-[10px] w-[10px] rounded-full border border-[#222] ${color}"></span>${body}</div>`;
        }).join('');

        const dot = join => `<button aria-label="Link" class="flex h-[25px] w-[26px] shrink-0 items-center justify-center border border-[#2b2b2b] bg-linear-to-b from-[#5c5c5c] to-[#474747] ${join ? 'rounded-r-md border-l-0' : 'ml-auto rounded-md'}">${icon('socketdot', 'h-2 w-2')}</button>`;
        const props = [
            ['Base Color:', 'bg-[#e7e7e7]'], ['Subsurface:', '0.000', 0], ['Subsurface Radius:', 'vector'], ['Subsurface Color:', 'bg-[#db5a5a]'],
            ['Metallic:', '1.000', 1], ['Specular:', '0.500', 0.5], ['Specular Tint:', '0.000', 0], ['Roughness:', '0.020', 0.02], ['Anisotropic:', '0.000', 0], ['Anisotropic Rotati…', '0.000', 0],
        ];
        $('props').innerHTML = props.map(([label, value, pos], i) => {
            let field;
            if (value === 'vector') field = `<div class="w-[239px] overflow-hidden rounded-xl border border-[#2b2b2b]">${[0, 1, 2].map(n => `<div class="flex ${n < 2 ? 'h-[25px] border-b' : 'h-[23px]'} items-center border-[#222] bg-linear-to-b from-[#9c9c9c] to-[#b4b4b4] px-1.5"><span class="text-[10px] text-[#777]">◀</span><input ${n ? `aria-label="${label} ${n}"` : `id="prop${i}"`} value="1.000" class="min-w-0 flex-1 text-right"><span class="ml-2 text-[10px] text-[#777]">▶</span></div>`).join('')}</div>${dot(false)}`;
            else if (value.startsWith('bg')) field = `<button id="prop${i}" class="h-[25px] flex-1 rounded-l-md border border-[#2b2b2b] ${value}"></button>${dot(true)}`;
            else field = `<div class="relative h-[25px] flex-1 overflow-hidden rounded-l-full border border-[#2b2b2b] bg-linear-to-b from-[#9c9c9c] to-[#b4b4b4]"><span class="absolute inset-y-0 left-0 bg-linear-to-b from-[#707070] to-[#7c7c7c]" style="width:calc(12px + ${pos} * (100% - 12px))"></span><input id="prop${i}" value="${value}" class="relative h-full w-full pr-[18px] text-right"></div>${dot(true)}`;
            return `<div class="flex items-start"><label for="prop${i}" class="w-[148px] shrink-0 pl-3 leading-[25px] whitespace-nowrap">${label}</label>${field}</div>`;
        }).join('');

        // timeline frame numbers
        for (let f = -40; f <= 280; f += 20) $('frames').innerHTML += `<li class="w-[83px] shrink-0 text-center">${f}</li>`;

        // pinned and running apps
        const apps = [
            ['Task View', '<path d="M4 7h12v10H4zM4 4V1M16 4V1M4 3h12M4 23v-3M16 23v-3M4 21h12M20 1v5M20 10v13M19 8h3" fill="none" stroke="#fff" stroke-width="1.300"/>', ''],
            ['Edge', '<path d="M1 11Q3 0 13 0q10 0 10 11v3H8q1 6 7 6 4 0 7-2v4q-3 2-8 2Q4 24 3 15 3 9 9 6 3 7 1 11zM8 10h9q0-5-4.500-5T8 10z" fill="#1f7fd6" fill-rule="evenodd"/>', ''],
            ['File Explorer', '<path d="M1 1h8l2 3h12v18H1z" fill="#f6d978"/><path d="M1 7h22v15H1z" fill="#fbe79b"/><path d="M4 23v-7q0-3 3-3h10q3 0 3 3v7h-4v-5H8v5z" fill="#45a5c4"/>', 'open'],
            ['Store', '<path d="M8 7V4q0-4 4-4t4 4v3" fill="none" stroke="#ddd" stroke-width="1.500"/><path d="M-1 6h26l-1 18H0z" fill="#fff"/><path d="M7 10h4v4H7z" fill="#e8512a"/><path d="M12 10h4v4h-4z" fill="#80b83a"/><path d="M7 15h4v4H7z" fill="#2fa3e0"/><path d="M12 15h4v4h-4z" fill="#f6b927"/>', ''],
            ['Mail', '<path d="M-1 9 12 0l13 9v14H-1z" fill="#fff"/><path d="M0 9h24l-9 5 3 5L0 9z" fill="#060b13"/>', ''],
            ['Flash', '<path d="M-1-1h26v26H-1z" fill="#b30d0d"/><path d="M13 1 6 14h5l-2 10 9-14h-6l4-9z" fill="#fff"/>', 'open'],
            ['Chrome', '<circle cx="12" cy="12" r="12" fill="#dc4437"/><path d="M12 12 1.600 6A12 12 0 0 0 12 24l5-9z" fill="#1a9f5a"/><path d="M12 12h0l5 3-5 9A12 12 0 0 0 22.400 6H12z" fill="#fdcd40"/><circle cx="12" cy="12" r="5.800" fill="#fff"/><circle cx="12" cy="12" r="4.500" fill="#4a87ee"/>', 'open'],
            ['Blender', '<path d="M-1 16 9 8.500H2V5.500h9.500L8.500 3l2.500-2.500L21.500 8A8.500 7.800 0 1 1 7 14L2 18.500Q0 19-1 16z" fill="#ea7f24"/><circle cx="15.500" cy="13.500" r="5.300" fill="#fff"/><circle cx="15.500" cy="13.500" r="3.200" fill="#245a8f"/>', 'active'],
        ];
        $('taskbar').innerHTML = apps.map(([name, art, state]) => `<button aria-label="${name}" class="relative flex w-[62px] items-center justify-center ${state === 'active' ? 'bg-[#3b4046]' : ''}"><svg class="h-[27px] w-[27px]" viewBox="-1 -1 26 26">${art}</svg>${state ? `<span class="absolute bottom-0 h-[3px] bg-[#82b4dc] ${state === 'active' ? 'w-full' : 'w-[50px]'}"></span>` : ''}</button>`).join('');
    </script>
</body>

</html>
